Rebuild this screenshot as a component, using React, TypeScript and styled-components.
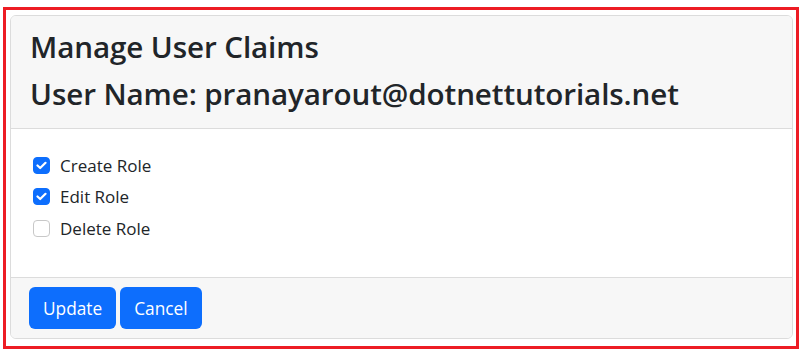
import * as React from "react";
import styled, { createGlobalStyle } from "styled-components";

const GlobalStyle = createGlobalStyle`
  html, body {
    margin: 0;
    padding: 0;
    background: #ffffff;
  }
  body {
    font-family: "Open Sans", "Noto Sans", sans-serif;
    color: #212529;
  }
`;

const Frame = styled.div`
  box-sizing: border-box;
  width: 796px;
  height: 342px;
  margin: 7px 0 0 3px;
  border: 3px solid #ed1c24;
  padding: 5px 3px 7px 4px;
  display: flex;
`;

const Card = styled.div`
  flex: 1;
  display: flex;
  flex-direction: column;
  border: 1px solid #dcdcdc;
  border-radius: 6px;
  overflow: hidden;
`;

const Header = styled.div`
  background: #f7f7f7;
  border-bottom: 1px solid #dcdcdc;
  height: 113px;
  box-sizing: border-box;
  padding: 7px 19px 0;
`;

const Title = styled.h3`
  margin: 0;
  font-size: 29.6px;
  font-weight: 600;
  line-height: 47px;
  letter-spacing: -0.1px;
  color: #212529;
  white-space: nowrap;
`;

const Body = styled.div`
  flex: 1;
  padding: 27px 22px 0;
  display: flex;
  flex-direction: column;
  gap: 13.5px;
`;

const CheckRow = styled.label`
  display: flex;
  align-items: center;
  gap: 10px;
  height: 18px;
  font-size: 17px;
  color: #212529;
`;

const Box = styled.span<{ $checked: boolean }>`
  box-sizing: border-box;
  width: 17px;
  height: 17px;
  border-radius: 4px;
  border: 1px solid ${p => (p.$checked ? "#0d6efd" : "#c8c8c8")};
  background: ${p => (p.$checked ? "#0d6efd" : "#ffffff")};
  display: flex;
  align-items: center;
  justify-content: center;
`;

const Footer = styled.div`
  background: #f7f7f7;
  border-top: 1px solid #dcdcdc;
  height: 61px;
  box-sizing: border-box;
  padding: 9px 18px 0;
  display: flex;
  gap: 4px;
  align-items: flex-start;
`;

const Button = styled.button`
  height: 42px;
  padding: 0 14px;
  border: none;
  border-radius: 6px;
  background: #0d6efd;
  color: #ffffff;
  font-family: "Open Sans", "Noto Sans", sans-serif;
  font-size: 17.3px;
  cursor: pointer;
`;

const Check = () => (
  <svg width="11" height="9" viewBox="0 0 11 9">
    <path
      d="M1.5 4.5 L4.2 7 L9.5 1.8"
      fill="none"
      stroke="#fff"
      strokeWidth="2.2"
      strokeLinecap="round"
      strokeLinejoin="round"
    />
  </svg>
);

const claims = [
  { name: "Create Role", checked: true },
  { name: "Edit Role", checked: true },
  { name: "Delete Role", checked: false },
];

export default function App() {
  return (
    <>
      <GlobalStyle />
      <Frame>
        <Card>
          <Header>
            <Title>Manage User Claims</Title>
            <Title>User Name: pranayarout@dotnettutorials.net</Title>
          </Header>
          <Body>
            {claims.map(c => (
              <CheckRow key={c.name}>
                <Box $checked={c.checked}>{c.checked && <Check />}</Box>
                {c.name}
              </CheckRow>
            ))}
          </Body>
          <Footer>
            <Button>Update</Button>
            <Button>Cancel</Button>
          </Footer>
        </Card>
      </Frame>
    </>
  );
}
